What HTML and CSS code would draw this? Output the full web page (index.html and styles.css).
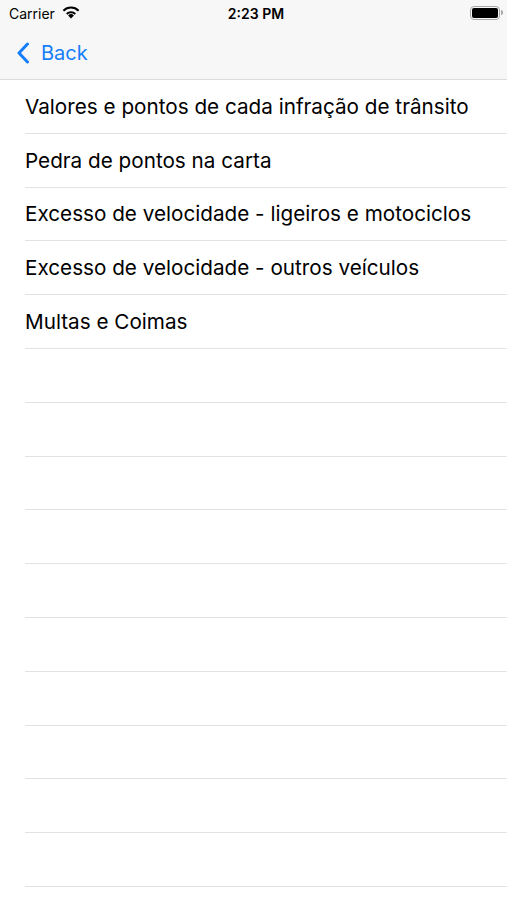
FILE: index.html
```html
<!DOCTYPE html>
<html lang="pt">
  <head>
    <meta charset="UTF-8" />
    <meta name="viewport" content="width=device-width, initial-scale=1.0" />
    <title>Infrações</title>
    <link rel="stylesheet" href="styles.css">
  </head>
  <body>
    <div class="topBar">
      <div class="statusBar">
        <div class="carrier">
          Carrier
          <svg class="wifi" width="20" height="14" viewBox="0 0 19 14">
            <path d="M9.5 13.5 L6.6 10.4 A4.2 4.2 0 0 1 12.4 10.4 Z" fill="#000" />
            <path d="M4.5 8.2 A7.2 7.2 0 0 1 14.5 8.2 L13.1 9.7 A5.2 5.2 0 0 0 5.9 9.7 Z" fill="#000" />
            <path d="M1.2 4.9 A11.8 11.8 0 0 1 17.8 4.9 L16.4 6.5 A9.7 9.7 0 0 0 2.6 6.5 Z" fill="#000" />
          </svg>
        </div>
        <div class="clock">2:23 PM</div>
        <div class="battery">
          <span class="batteryBody"><span class="batteryFill"></span></span>
          <span class="batteryNub"></span>
        </div>
      </div>
      <div class="navBar">
        <span class="back">
          <svg width="14" height="22" viewBox="0 0 14 22">
            <path d="M11.5 2 L3 11 L11.5 20" fill="none" stroke="#157efb" stroke-width="3" stroke-linecap="round" stroke-linejoin="round" />
          </svg>
          Back
        </span>
      </div>
    </div>

    <ul class="list">
      <li>Valores e pontos de cada infração de trânsito</li>
      <li>Pedra de pontos na carta</li>
      <li>Excesso de velocidade - ligeiros e motociclos</li>
      <li>Excesso de velocidade - outros veículos</li>
      <li>Multas e Coimas</li>
      <li></li>
      <li></li>
      <li></li>
      <li></li>
      <li></li>
      <li></li>
      <li></li>
      <li></li>
      <li></li>
      <li></li>
    </ul>
  </body>
</html>
```

FILE: styles.css
```css
body {
  margin: 0;
  background: #fff;
  font-family: Inter, "Liberation Sans", sans-serif;
  color: #000;
  overflow: hidden;
}
.topBar {
  background: #f7f7f7;
  border-bottom: 1px solid #dcdcdc;
}
.statusBar {
  height: 27px;
  display: flex;
  align-items: center;
  justify-content: space-between;
  padding: 0 4px 0 9px;
  font-size: 14px;
}
.carrier {
  flex: 1;
  display: flex;
  align-items: center;
  gap: 6px;
  margin-top: -1px;
}
.wifi {
  margin-top: -3px;
}
.clock {
  font-weight: 600;
  margin-top: -1px;
}
.battery {
  flex: 1;
  display: flex;
  justify-content: flex-end;
  align-items: center;
  margin-top: -2px;
}
.batteryBody {
  width: 26px;
  height: 10px;
  border: 1.5px solid #a8a8a8;
  border-radius: 4px;
  padding: 1px;
  display: flex;
}
.batteryFill {
  flex: 1;
  background: #000;
  border-radius: 2px;
}
.batteryNub {
  width: 2px;
  height: 5px;
  background: #a8a8a8;
  border-radius: 0 2px 2px 0;
  margin-left: 1px;
}
.navBar {
  height: 52px;
  display: flex;
  align-items: center;
  padding-left: 16px;
}
.back {
  display: flex;
  align-items: center;
  gap: 11px;
  color: #157efb;
  font-size: 20px;
  margin-top: -1px;
}
.list {
  list-style: none;
  margin: 0;
  padding: 0 0 0 25px;
}
.list li {
  height: 52.8px;
  border-bottom: 1px solid #e2e2e2;
  display: flex;
  align-items: center;
  font-size: 20.7px;
  white-space: nowrap;
}
```
